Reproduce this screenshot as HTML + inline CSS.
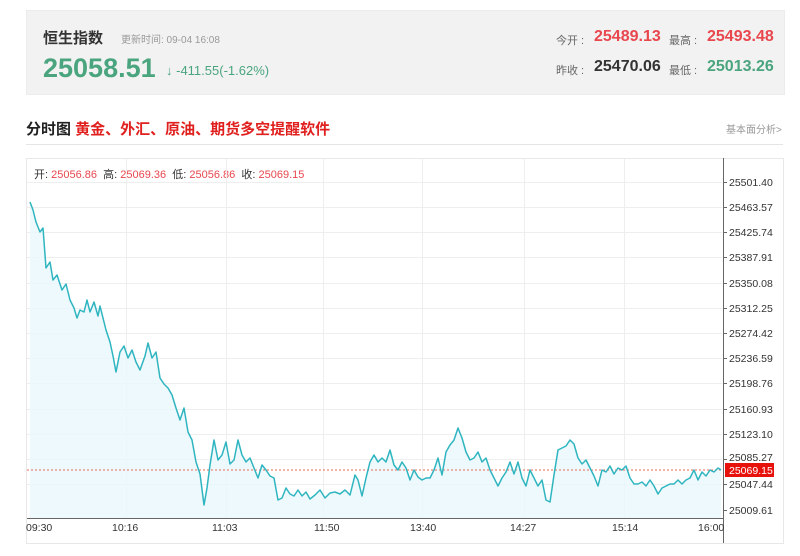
<!DOCTYPE html>
<html><head><meta charset="utf-8"><style>
body{margin:0;width:800px;height:556px;background:#fff;font-family:"Liberation Sans","Noto Sans CJK SC",sans-serif;position:relative;overflow:hidden}
.a{position:absolute;white-space:nowrap}
.g{color:#4aa57f}.r{color:#e8474e}
</style></head><body>
<div class="a" style="left:26px;top:10px;width:757px;height:83px;background:#f2f2f2;border:1px solid #ececec"></div>
<div class="a" style="left:43px;top:27px;font-size:15px;font-weight:bold;color:#333">恒生指数</div>
<div class="a" style="left:121px;top:31px;font-size:10px;color:#999">更新时间: 09-04 16:08</div>
<div class="a g" style="left:43px;top:53px;font-size:27px;font-weight:bold">25058.51</div>
<div class="a g" style="left:166px;top:63px;font-size:13px">↓ -411.55(-1.62%)</div>
<div class="a" style="left:556px;top:32px;font-size:11px;color:#666">今开 :</div>
<div class="a r" style="left:594px;top:28px;font-size:16px;font-weight:bold">25489.13</div>
<div class="a" style="left:669px;top:32px;font-size:11px;color:#666">最高 :</div>
<div class="a r" style="left:707px;top:28px;font-size:16px;font-weight:bold">25493.48</div>
<div class="a" style="left:556px;top:62px;font-size:11px;color:#666">昨收 :</div>
<div class="a" style="left:594px;top:58px;font-size:16px;font-weight:bold;color:#333">25470.06</div>
<div class="a" style="left:669px;top:62px;font-size:11px;color:#666">最低 :</div>
<div class="a g" style="left:707px;top:58px;font-size:16px;font-weight:bold">25013.26</div>
<div class="a" style="left:26px;top:118px;font-size:15px;font-weight:bold;color:#222">分时图 <span style="color:#e0201e">黄金、外汇、原油、期货多空提醒软件</span></div>
<div class="a" style="left:726px;top:121px;font-size:10px;color:#999">基本面分析&gt;</div>
<div class="a" style="left:26px;top:144px;width:757px;height:1px;background:#e5e5e5"></div>
<div class="a" style="left:26px;top:158px;width:756px;height:384px;border:1px solid #e8e8e8"></div>
<div class="a" style="left:34px;top:166px;font-size:11px;color:#333">开: <span class="r">25056.86</span>&nbsp; 高: <span class="r">25069.36</span>&nbsp; 低: <span class="r">25056.86</span>&nbsp; 收: <span class="r">25069.15</span></div>
<svg class="a" style="left:0;top:0" width="800" height="556">
<g stroke="#eeeeee" stroke-width="1">
<line x1="27" y1="207.5" x2="722" y2="207.5"/><line x1="27" y1="232.5" x2="722" y2="232.5"/><line x1="27" y1="257.5" x2="722" y2="257.5"/><line x1="27" y1="283.5" x2="722" y2="283.5"/><line x1="27" y1="308.5" x2="722" y2="308.5"/><line x1="27" y1="333.5" x2="722" y2="333.5"/><line x1="27" y1="358.5" x2="722" y2="358.5"/><line x1="27" y1="383.5" x2="722" y2="383.5"/><line x1="27" y1="409.5" x2="722" y2="409.5"/><line x1="27" y1="434.5" x2="722" y2="434.5"/><line x1="27" y1="459.5" x2="722" y2="459.5"/><line x1="27" y1="484.5" x2="722" y2="484.5"/><line x1="27" y1="182.5" x2="722" y2="182.5"/>
<line x1="126.5" y1="159" x2="126.5" y2="518"/><line x1="226.5" y1="159" x2="226.5" y2="518"/><line x1="323.5" y1="159" x2="323.5" y2="518"/><line x1="422.5" y1="159" x2="422.5" y2="518"/><line x1="524.5" y1="159" x2="524.5" y2="518"/><line x1="624.5" y1="159" x2="624.5" y2="518"/>
</g>
<polygon fill="#e9f7fb" opacity="0.8" points="30,202 33,210 36,222 40,232 43,228 46,268 50,262 53,280 57,275 62,290 66,284 70,300 74,308 77,318 80,310 84,312 87,300 90,312 94,302 98,316 100,306 103,318 106,330 110,342 113,356 116,372 120,352 124,346 128,358 132,350 136,362 140,370 145,356 148,343 152,358 156,352 160,378 164,384 168,388 172,395 176,408 180,420 184,408 188,432 192,440 196,462 200,474 204,505 207,488 210,465 214,440 218,460 222,455 226,442 230,464 234,460 238,440 242,455 246,462 250,458 254,468 258,478 262,465 266,470 270,476 274,478 278,500 282,498 286,488 290,494 294,496 298,490 302,496 306,492 310,499 315,495 320,490 325,498 330,493 335,492 340,494 345,490 350,495 355,475 358,480 362,496 366,478 370,462 374,455 378,462 382,458 386,462 390,450 394,465 398,470 402,462 406,468 410,480 414,470 418,477 422,480 426,478 430,478 434,470 438,458 442,475 446,452 450,445 454,440 458,428 462,438 466,452 470,460 474,458 478,452 482,462 486,458 490,470 494,478 498,486 502,478 506,472 510,462 514,474 518,462 522,478 526,486 530,470 534,478 538,486 542,480 546,500 550,502 554,475 558,450 562,448 566,446 570,440 574,444 578,458 582,464 586,460 590,468 594,476 598,486 602,470 606,472 610,466 614,474 618,468 622,470 626,466 630,478 634,484 638,484 642,482 646,486 650,480 654,486 658,494 662,488 666,486 670,484 674,484 678,480 682,484 686,480 690,478 694,470 698,480 702,472 706,476 710,470 714,472 718,468 721,470 721,518 30,518"/>
<line x1="27" y1="470" x2="722" y2="470" stroke="#e86a5a" stroke-width="1" stroke-dasharray="2,2"/>
<polyline fill="none" stroke="#2fb5c0" stroke-width="1.5" stroke-linejoin="round" points="30,202 33,210 36,222 40,232 43,228 46,268 50,262 53,280 57,275 62,290 66,284 70,300 74,308 77,318 80,310 84,312 87,300 90,312 94,302 98,316 100,306 103,318 106,330 110,342 113,356 116,372 120,352 124,346 128,358 132,350 136,362 140,370 145,356 148,343 152,358 156,352 160,378 164,384 168,388 172,395 176,408 180,420 184,408 188,432 192,440 196,462 200,474 204,505 207,488 210,465 214,440 218,460 222,455 226,442 230,464 234,460 238,440 242,455 246,462 250,458 254,468 258,478 262,465 266,470 270,476 274,478 278,500 282,498 286,488 290,494 294,496 298,490 302,496 306,492 310,499 315,495 320,490 325,498 330,493 335,492 340,494 345,490 350,495 355,475 358,480 362,496 366,478 370,462 374,455 378,462 382,458 386,462 390,450 394,465 398,470 402,462 406,468 410,480 414,470 418,477 422,480 426,478 430,478 434,470 438,458 442,475 446,452 450,445 454,440 458,428 462,438 466,452 470,460 474,458 478,452 482,462 486,458 490,470 494,478 498,486 502,478 506,472 510,462 514,474 518,462 522,478 526,486 530,470 534,478 538,486 542,480 546,500 550,502 554,475 558,450 562,448 566,446 570,440 574,444 578,458 582,464 586,460 590,468 594,476 598,486 602,470 606,472 610,466 614,474 618,468 622,470 626,466 630,478 634,484 638,484 642,482 646,486 650,480 654,486 658,494 662,488 666,486 670,484 674,484 678,480 682,484 686,480 690,478 694,470 698,480 702,472 706,476 710,470 714,472 718,468 721,470"/>
<line x1="723.5" y1="158" x2="723.5" y2="543" stroke="#666"/>
<line x1="27" y1="518.5" x2="724" y2="518.5" stroke="#666"/>
<g stroke="#666"><line x1="723" y1="182.5" x2="727" y2="182.5"/><line x1="723" y1="207.5" x2="727" y2="207.5"/><line x1="723" y1="232.5" x2="727" y2="232.5"/><line x1="723" y1="257.5" x2="727" y2="257.5"/><line x1="723" y1="283.5" x2="727" y2="283.5"/><line x1="723" y1="308.5" x2="727" y2="308.5"/><line x1="723" y1="333.5" x2="727" y2="333.5"/><line x1="723" y1="358.5" x2="727" y2="358.5"/><line x1="723" y1="383.5" x2="727" y2="383.5"/><line x1="723" y1="409.5" x2="727" y2="409.5"/><line x1="723" y1="434.5" x2="727" y2="434.5"/><line x1="723" y1="459.5" x2="727" y2="459.5"/><line x1="723" y1="484.5" x2="727" y2="484.5"/><line x1="723" y1="510.5" x2="727" y2="510.5"/></g>
<rect x="725" y="463" width="49" height="14" fill="#e8120c"/>
<g font-family="Liberation Sans, sans-serif" font-size="10.5" fill="#333">
<text x="729" y="186">25501.40</text><text x="729" y="211">25463.57</text><text x="729" y="236">25425.74</text><text x="729" y="261">25387.91</text><text x="729" y="287">25350.08</text><text x="729" y="312">25312.25</text><text x="729" y="337">25274.42</text><text x="729" y="362">25236.59</text><text x="729" y="387">25198.76</text><text x="729" y="413">25160.93</text><text x="729" y="438">25123.10</text><text x="729" y="461">25085.27</text><text x="729" y="488">25047.44</text><text x="729" y="514">25009.61</text>
<text x="729" y="474" fill="#fff">25069.15</text>
<text x="26" y="531">09:30</text><text x="112" y="531">10:16</text><text x="212" y="531">11:03</text><text x="314" y="531">11:50</text><text x="410" y="531">13:40</text><text x="510" y="531">14:27</text><text x="612" y="531">15:14</text><text x="698" y="531">16:00</text>
</g>
</svg>
</body></html>
